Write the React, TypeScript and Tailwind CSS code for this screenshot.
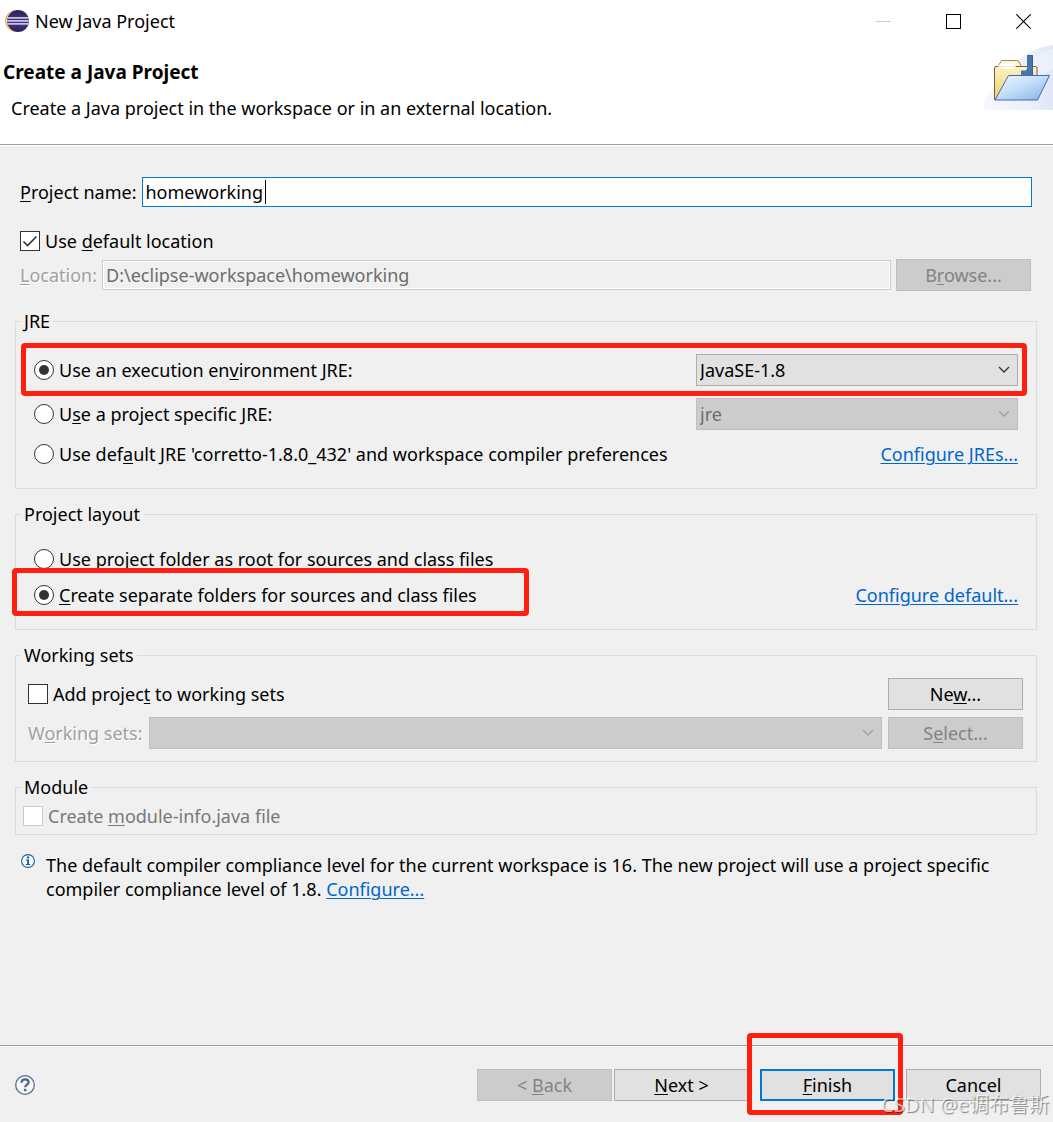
import type { ReactNode } from "react";

function Key({ children }: { children: ReactNode }) {
  return <span className="underline decoration-1 underline-offset-2">{children}</span>;
}

function CheckBox({ checked = false, disabled = false, children }: { checked?: boolean; disabled?: boolean; children: ReactNode }) {
  return (
    <label className={`flex h-6 items-center gap-[5px] ${disabled ? "text-[#787878]" : ""}`}>
      <span className="relative grid size-5 shrink-0 place-items-center">
        <input
          type="checkbox"
          defaultChecked={checked}
          disabled={disabled}
          className="peer size-5 appearance-none border border-[#333] bg-white disabled:border-[#ccc]"
        />
        <svg viewBox="0 0 20 20" className="pointer-events-none absolute inset-0 hidden size-5 peer-checked:block" fill="none" stroke="#333" strokeWidth="1.6">
          <path d="M3.5 10.5 7.5 14.5 16.5 5.5" />
        </svg>
      </span>
      <span>{children}</span>
    </label>
  );
}

function Radio({ name, checked = false, children }: { name: string; checked?: boolean; children: ReactNode }) {
  return (
    <label className="flex h-6 items-center gap-[5px]">
      <span className="relative grid size-5 shrink-0 place-items-center">
        <input
          type="radio"
          name={name}
          defaultChecked={checked}
          className="peer size-5 appearance-none rounded-full border border-[#333] bg-white"
        />
        <span className="pointer-events-none absolute hidden size-2.5 rounded-full bg-[#333] peer-checked:block" />
      </span>
      <span>{children}</span>
    </label>
  );
}

function PushButton({ disabled = false, primary = false, children }: { disabled?: boolean; primary?: boolean; children: ReactNode }) {
  return (
    <button
      type="button"
      disabled={disabled}
      className={`h-8 w-[135px] shrink-0 bg-[#e1e1e1] disabled:border-[#bfbfbf] disabled:bg-[#ccc] disabled:text-[#838383] ${
        primary ? "border-2 border-[#0078d7]" : "border border-[#adadad]"
      }`}
    >
      {children}
    </button>
  );
}

function Select({ id, label, value, disabled = false }: { id: string; label?: string; value: string; disabled?: boolean }) {
  return (
    <div className="relative w-full">
      <select
        id={id}
        aria-label={label}
        disabled={disabled}
        defaultValue={value}
        className="block h-8 w-full appearance-none border border-[#adadad] bg-[#e1e1e1] px-[3px] disabled:border-[#bfbfbf] disabled:bg-[#ccc] disabled:text-[#6d6d6d] disabled:opacity-100"
      >
        <option value={value}>{value}</option>
      </select>
      <svg
        viewBox="0 0 12 8"
        className={`pointer-events-none absolute top-3 right-2 h-2 w-3 ${disabled ? "text-[#a0a0a0]" : "text-[#333]"}`}
        fill="none"
        stroke="currentColor"
        strokeWidth="1.3"
      >
        <path d="M1 1 6 6 11 1" />
      </svg>
    </div>
  );
}

function Group({ title, className, children }: { title: string; className: string; children: ReactNode }) {
  return (
    <fieldset className="min-w-0 border border-[#dcdcdc]">
      <legend className="ml-[5px] h-6 px-[3px]">{title}</legend>
      <div className={className}>{children}</div>
    </fieldset>
  );
}

function Highlight({ className }: { className: string }) {
  return <span className={`pointer-events-none absolute z-10 rounded-[4px] border-[5px] border-[#ff1f10] ${className}`} />;
}

function Link({ children }: { children: ReactNode }) {
  return (
    <a href="#" className="text-[#0066cc] underline decoration-1 underline-offset-2">
      {children}
    </a>
  );
}

function EclipseLogo() {
  return (
    <svg viewBox="0 0 24 24" className="size-6 shrink-0">
      <defs>
        <linearGradient id="globe" x1="0" y1="0" x2="0" y2="1">
          <stop offset="0" stopColor="#2c2255" />
          <stop offset="0.55" stopColor="#43358a" />
          <stop offset="1" stopColor="#2c2255" />
        </linearGradient>
        <clipPath id="globeClip">
          <circle cx="13" cy="12" r="11" />
        </clipPath>
      </defs>
      <circle cx="11.2" cy="12" r="11" fill="#f7a23b" />
      <circle cx="12.4" cy="12" r="11" fill="#fff" />
      <circle cx="13" cy="12" r="11" fill="url(#globe)" />
      <g clipPath="url(#globeClip)" fill="#e8e6f2">
        <rect y="8.2" width="24" height="1.4" />
        <rect y="11.2" width="24" height="1.4" />
        <rect y="14.2" width="24" height="1.4" />
      </g>
    </svg>
  );
}

function WizardBanner() {
  return (
    <svg viewBox="0 0 70 66" className="h-[66px] w-[70px] shrink-0">
      <defs>
        <linearGradient id="sweep" x1="0" y1="0" x2="1" y2="0">
          <stop offset="0" stopColor="#f8f9fd" />
          <stop offset="0.7" stopColor="#eaeffa" />
          <stop offset="1" stopColor="#dfe6f6" />
        </linearGradient>
        <linearGradient id="back" x1="0" y1="0" x2="0" y2="1">
          <stop offset="0" stopColor="#fbf3c6" />
          <stop offset="1" stopColor="#efcf62" />
        </linearGradient>
        <linearGradient id="front" x1="0" y1="0" x2="1" y2="1">
          <stop offset="0" stopColor="#f2f9ff" />
          <stop offset="0.45" stopColor="#c4e0fa" />
          <stop offset="1" stopColor="#86aee6" />
        </linearGradient>
      </defs>
      <path d="M0 66C2 46 14 42 23 30 36 10 54 3 70 1V66Z" fill="url(#sweep)" />
      <path d="M38 30C46 18 58 8 70 5V24C60 30 50 40 40 50Z" fill="#eef2fb" opacity="0.7" />
      <path d="M15 22.5 18.5 16.5H35L38.5 22.5Z" fill="#fdf5d3" stroke="#a08a62" />
      <path d="M11.5 55.5V24Q11.5 22.5 13 22.5H52.5Q54 22.5 54 24V55.5Z" fill="url(#back)" stroke="#7a5a4a" />
      <ellipse cx="24" cy="22" rx="9" ry="3" fill="#fff" opacity="0.85" />
      <path d="M44 11H50V32H38V26.500H42.500L44 25Z" fill="#4478a8" />
      <path d="M44.500 11.500H49.500V32" fill="none" stroke="#2f649a" />
      <path d="M25.5 31.5H66.5L54.5 56H12Z" fill="url(#front)" stroke="#4a66b4" strokeLinejoin="round" />
    </svg>
  );
}

function TitleBar() {
  return (
    <div className="flex h-[42px] items-center pr-[22px] pl-[5px]">
      <EclipseLogo />
      <span className="ml-[6px]">New Java Project</span>
      <div className="ml-auto flex gap-[55px]">
        <button type="button" aria-label="Minimize" disabled>
          <svg viewBox="0 0 15 15" className="size-[15px]" fill="none" stroke="#ccc">
            <path d="M0 7.5H15" />
          </svg>
        </button>
        <button type="button" aria-label="Maximize">
          <svg viewBox="0 0 15 15" className="size-[15px]" fill="none" stroke="#000">
            <rect x="0.5" y="0.5" width="14" height="14" />
          </svg>
        </button>
        <button type="button" aria-label="Close">
          <svg viewBox="0 0 15 15" className="size-[15px]" fill="none" stroke="#000" strokeWidth="1.1">
            <path d="M0.300 0.300 14.700 14.700M14.700 0.300 0.300 14.700" />
          </svg>
        </button>
      </div>
    </div>
  );
}

export default function App() {
  return (
    <div className="relative flex min-h-screen flex-col bg-[#f0f0f0] font-['Noto_Sans','Noto_Sans_CJK_SC',sans-serif] text-[18px] leading-6 text-black">
      <header className="border-b border-[#a0a0a0] bg-white">
        <TitleBar />
        <div className="flex h-[102px] justify-between pt-[2px]">
          <div className="pt-4">
            <h1 className="pl-[3px] text-[19px] font-bold">Create a Java Project</h1>
            <p className="mt-3 pl-[11px]">Create a Java project in the workspace or in an external location.</p>
          </div>
          <WizardBanner />
        </div>
      </header>

      <main className="flex-1 border-t border-white pt-[31px] pr-4 pl-[15px]">
        <div className="flex items-center gap-[5px] pr-[5px] pl-[5px]">
          <label htmlFor="project-name" className="shrink-0">
            <Key>P</Key>roject name:
          </label>
          <div className="relative flex-1">
            <input
              id="project-name"
              type="text"
              defaultValue="homeworking"
              className="block h-[30px] w-full border border-[#0078d7] bg-white px-[3px] outline-none"
            />
            <span className="pointer-events-none absolute top-[3px] left-[123px] h-6 w-px bg-black" />
          </div>
        </div>

        <div className="mt-[22px] pl-[5px]">
          <CheckBox checked>
            Use <Key>d</Key>efault location
          </CheckBox>
        </div>

        <div className="mt-[6px] flex items-center gap-[5px] pr-[6px] pl-[5px]">
          <label htmlFor="location" className="shrink-0 text-[#a0a0a0] text-shadow-[1px_1px_0_#fff]">
            <Key>L</Key>ocation:
          </label>
          <input
            id="location"
            type="text"
            disabled
            defaultValue="D:\eclipse-workspace\homeworking"
            className="h-[30px] min-w-0 flex-1 border border-[#ccc] bg-[#f0f0f0] px-[3px] text-[#6d6d6d] inset-ring inset-ring-white"
          />
          <PushButton disabled>
            B<Key>r</Key>owse...
          </PushButton>
        </div>

        <div className="mt-[18px] flex flex-col gap-[13px]">
          <Group title="JRE" className="px-[18px] pt-[21px] pb-[22px]">
            <div className="relative flex items-center justify-between">
              <Radio name="jre" checked>
                Use an execution en<Key>v</Key>ironment JRE:
              </Radio>
              <div className="w-[322px]">
                <Select id="execution-environment" label="Execution environment" value="JavaSE-1.8" />
              </div>
              <Highlight className="-top-[11px] -right-[9px] -bottom-[10px] -left-[13px]" />
            </div>
            <div className="mt-3 flex items-center justify-between">
              <Radio name="jre">
                U<Key>s</Key>e a project specific JRE:
              </Radio>
              <div className="w-[322px]">
                <Select id="specific-jre" label="Project specific JRE" value="jre" disabled />
              </div>
            </div>
            <div className="mt-3 flex items-center justify-between">
              <Radio name="jre">
                Use def<Key>a</Key>ult JRE 'corretto-1.8.0_432' and workspace compiler preferences
              </Radio>
              <Link>Configure JREs...</Link>
            </div>
          </Group>

          <Group title="Project layout" className="px-[18px] pt-[21px] pb-[22px]">
            <Radio name="layout">
              <Key>U</Key>se project folder as root for sources and class files
            </Radio>
            <div className="relative mt-3 flex items-center justify-between">
              <Radio name="layout" checked>
                <Key>C</Key>reate separate folders for sources and class files
              </Radio>
              <Link>Configure default...</Link>
              <Highlight className="-top-[15px] -bottom-[9px] -left-[22px] w-[517px]" />
            </div>
          </Group>

          <Group title="Working sets" className="pt-[11px] pr-[13px] pb-3 pl-3">
            <div className="flex items-center justify-between">
              <CheckBox>
                Add projec<Key>t</Key> to working sets
              </CheckBox>
              <PushButton>
                Ne<Key>w</Key>...
              </PushButton>
            </div>
            <div className="mt-[7px] flex items-center gap-[6px]">
              <label htmlFor="working-sets" className="shrink-0 text-[#a0a0a0] text-shadow-[1px_1px_0_#fff]">
                W<Key>o</Key>rking sets:
              </label>
              <Select id="working-sets" value="" disabled />
              <PushButton disabled>
                S<Key>e</Key>lect...
              </PushButton>
            </div>
          </Group>

          <Group title="Module" className="pt-[5px] pb-[6px] pl-[7px]">
            <CheckBox disabled>
              Create <Key>m</Key>odule-info.java file
            </CheckBox>
          </Group>
        </div>

        <div className="mt-[18px] flex gap-[11px] pl-[6px]">
          <svg viewBox="0 0 14 14" className="mt-px size-[14px] shrink-0">
            <circle cx="7" cy="7" r="6.4" fill="#f4f9fd" stroke="#1f5f9c" strokeWidth="1.1" />
            <path d="M6 2.600H8V4.400H6ZM5 5.500H8V10H9.200V11H4.900V10H6.200V6.500H5Z" fill="#15569a" />
          </svg>
          <p>
            The default compiler compliance level for the current workspace is 16. The new project will use a project specific
            compiler compliance level of 1.8. <Link>Configure...</Link>
          </p>
        </div>
      </main>

      <footer className="border-t border-[#a0a0a0]">
        <div className="flex items-center border-t border-white pt-[22px] pr-3 pb-[21px] pl-[15px]">
          <button type="button" aria-label="Help">
            <svg viewBox="0 0 20 20" className="size-5">
              <circle cx="10" cy="10" r="9.300" fill="#f7f7f7" stroke="#5a6f94" strokeWidth="1.3" />
              <path d="M6.600 7.800C6.600 5.300 8 4.400 10.100 4.400 12.200 4.400 13.600 5.500 13.600 7.300 13.600 9.600 10.200 9.800 10.200 12.300" fill="none" stroke="#4f658d" strokeWidth="2.300" />
              <rect x="9" y="13.800" width="2.400" height="2.400" fill="#4f658d" />
            </svg>
          </button>
          <div className="ml-auto flex gap-[11px]">
            <div className="flex gap-[2px]">
              <PushButton disabled>
                &lt; <Key>B</Key>ack
              </PushButton>
              <PushButton>
                <Key>N</Key>ext &gt;
              </PushButton>
            </div>
            <div className="relative">
              <PushButton primary>
                <Key>F</Key>inish
              </PushButton>
              <Highlight className="-top-9 -right-2 -bottom-[14px] -left-[13px]" />
            </div>
            <PushButton>Cancel</PushButton>
          </div>
        </div>
      </footer>

      <span className="pointer-events-none absolute right-1 bottom-[5px] z-20 text-[20px] text-white/70 text-shadow-[1px_1px_1px_rgb(0_0_0/0.45)]">
        CSDN @e调布鲁斯
      </span>
    </div>
  );
}
